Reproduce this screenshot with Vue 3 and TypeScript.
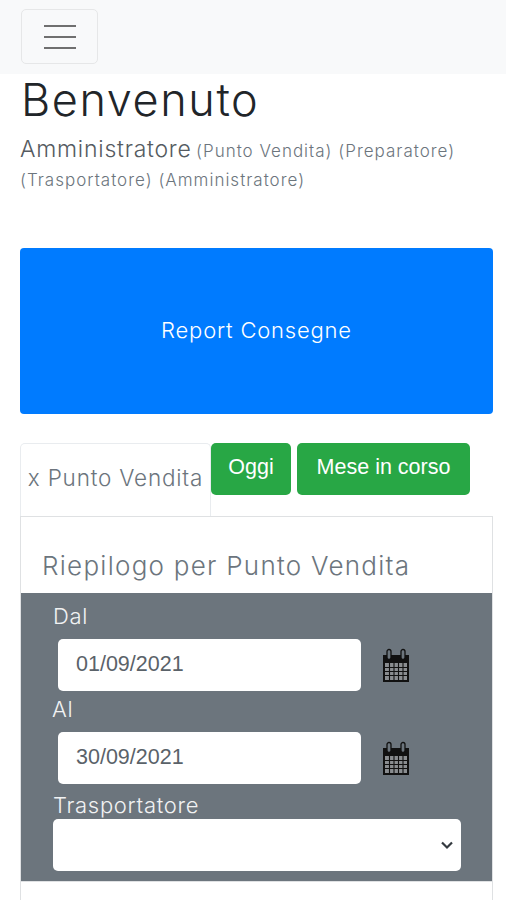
<script setup lang="ts">
const fields = [
  { label: 'Dal', value: '01/09/2021', cls: 'l1' },
  { label: 'Al', value: '30/09/2021', cls: 'l2' },
]
</script>

<template>
  <div class="page">
    <nav class="nav">
      <button class="toggler" aria-label="Menu">
        <svg width="34" height="26" viewBox="0 0 34 26"><path d="M1 2h32M1 13h32M1 24h32" stroke="#6f6f6f" stroke-width="2.2" fill="none" /></svg>
      </button>
    </nav>
    <main class="main">
      <h1 class="title">Benvenuto</h1>
      <p class="sub"><span class="big">Amministratore</span> <small>(Punto Vendita) (Preparatore)</small> <small>(Trasportatore) (Amministratore)</small></p>
      <a class="report">Report Consegne</a>
      <div class="tabs">
        <div class="tab">x Punto Vendita</div>
        <button class="green oggi">Oggi</button>
        <button class="green mese">Mese in corso</button>
      </div>
      <section class="card">
        <h2 class="card-title">Riepilogo per Punto Vendita</h2>
        <div class="filters">
          <template v-for="f in fields" :key="f.label">
            <label class="lab" :class="f.cls">{{ f.label }}</label>
            <div class="date-row">
              <div class="input">{{ f.value }}</div>
              <svg class="cal" width="28" height="35" viewBox="0 0 28 35">
                <path d="M1 7h26v27H1z" fill="#111" />
                <rect x="3" y="15" width="22" height="17" fill="#8a8d90" />
                <path d="M3 19.5h22M3 23.5h22M3 27.5h22M7.5 15v17M12 15v17M16.5 15v17M21 15v17" stroke="#111" stroke-width="1.1" />
                <rect x="5" y="1.5" width="4" height="10" rx="2" fill="#6c757d" stroke="#111" stroke-width="1.3" />
                <rect x="19" y="1.5" width="4" height="10" rx="2" fill="#6c757d" stroke="#111" stroke-width="1.3" />
              </svg>
            </div>
          </template>
          <label class="lab l3">Trasportatore</label>
          <div class="select">
            <svg width="14" height="10" viewBox="0 0 14 10"><path d="M2 2.5l5 5 5-5" stroke="#343a40" stroke-width="2.2" fill="none" /></svg>
          </div>
        </div>
        <div class="card-rest"></div>
      </section>
    </main>
  </div>
</template>

<style>
html, body { margin: 0; background: #fff; overflow: hidden; }
</style>

<style scoped>
.page { width: 506px; height: 900px; overflow: hidden; font-family: Inter, "Open Sans", sans-serif; color: #6c757d; }
.nav { height: 74px; background: #f8f9fa; padding: 9px 21px 0; box-sizing: border-box; }
.toggler { width: 77px; height: 55px; box-sizing: border-box; padding: 0; background: transparent; border: 1.5px solid #e6e7e8; border-radius: 5px; display: flex; align-items: center; justify-content: center; }
.main { padding: 0 13px 0 20px; }
.title { margin: 0 0 0 1px; font-size: 45px; font-weight: 300; line-height: 52px; color: #212529; letter-spacing: 1.6px; white-space: nowrap; }
.sub { margin: 9px 30px 0 0; line-height: 29px; height: 58px; font-weight: 300; color: #555b61; }
.big { font-size: 23px; letter-spacing: 0.75px; }
.sub small { font-size: 17px; letter-spacing: 1px; color: #6c757d; }
.report { display: flex; align-items: center; justify-content: center; height: 166px; margin-top: 55px; background: #007bff; border-radius: 4px; color: #fff; font-size: 22px; font-weight: 300; letter-spacing: 0.8px; padding-bottom: 2px; box-sizing: border-box; }
.tabs { display: flex; align-items: flex-start; margin-top: 29px; height: 73px; }
.tab { width: 191px; height: 73px; box-sizing: border-box; border: 1px solid #e9ecef; border-bottom: none; border-radius: 5px 5px 0 0; font-size: 22.5px; font-weight: 300; letter-spacing: 0.8px; line-height: 67px; text-align: center; white-space: nowrap; color: #6c757d; }
.green { height: 52px; background: #28a745; border: none; border-radius: 5px; color: #fff; font-family: "Liberation Sans", Arial, sans-serif; font-size: 21.5px; padding: 0 0 3px; }
.oggi { width: 80px; }
.mese { width: 173px; margin-left: 6px; }
.card { width: 473px; border: 1px solid #dfe1e3; border-bottom: none; box-sizing: border-box; }
.card-title { margin: 0; font-size: 26px; font-weight: 300; height: 76px; padding: 34px 0 0 21px; box-sizing: border-box; line-height: 30px; letter-spacing: 1.26px; color: #6c757d; white-space: nowrap; }
.filters { background: #6c757d; height: 288px; box-sizing: border-box; padding: 9px 0 0 32px; }
.lab { display: block; color: #f1f2f3; font-size: 22px; font-weight: 300; letter-spacing: 0.7px; line-height: 28px; }
.date-row { display: flex; align-items: center; margin: 9px 0 0 5px; height: 52px; }
.input { width: 303px; height: 52px; box-sizing: border-box; background: #fff; border-radius: 5px; padding: 0 0 0 18px; line-height: 50px; font-family: "Liberation Sans", Arial, sans-serif; font-size: 21.5px; color: #5a6269; }
.cal { margin-left: 21px; }
.l2 { margin-top: 4px; margin-left: -1px; height: 28px; }
.l3 { margin-top: 7px; height: 27px; }
.select { width: 408px; height: 52px; margin-top: 1px; box-sizing: border-box; background: #fff; border-radius: 5px; display: flex; align-items: center; justify-content: flex-end; padding-right: 7px; }
.card-rest { height: 60px; border-top: 1px solid #dfe1e3; }
</style>
